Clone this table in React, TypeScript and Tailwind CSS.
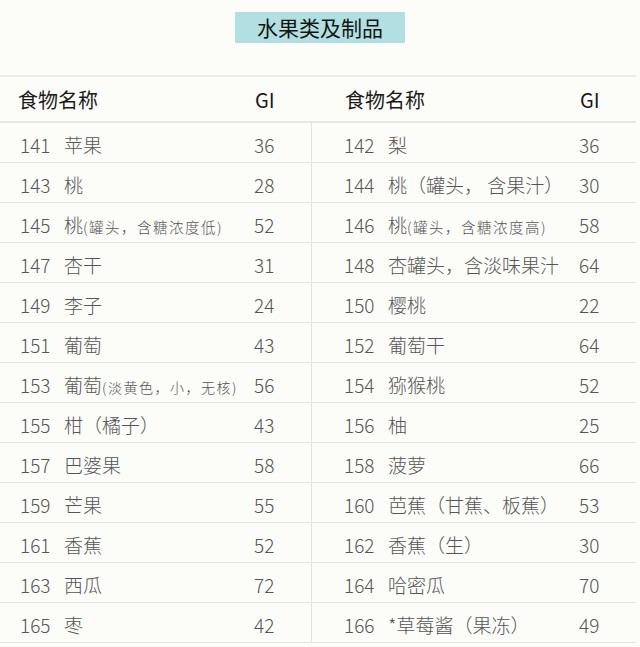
import React from "react";

type Item = { no: number; name: React.ReactNode; gi: number };

const font = { fontFamily: '"Noto Sans CJK SC", "Noto Sans", sans-serif' };

const rows: [Item, Item][] = [
  [{ no: 141, name: "苹果", gi: 36 }, { no: 142, name: "梨", gi: 36 }],
  [{ no: 143, name: "桃", gi: 28 }, { no: 144, name: "桃（罐头， 含果汁）", gi: 30 }],
  [
    {
      no: 145,
      name: <>桃<span className="text-[14.5px] tracking-[1.5px]">(罐头，含糖浓度低)</span></>,
      gi: 52,
    },
    {
      no: 146,
      name: <>桃<span className="text-[14.5px] tracking-[1.5px]">(罐头，含糖浓度高)</span></>,
      gi: 58,
    },
  ],
  [{ no: 147, name: "杏干", gi: 31 }, { no: 148, name: "杏罐头，含淡味果汁", gi: 64 }],
  [{ no: 149, name: "李子", gi: 24 }, { no: 150, name: "樱桃", gi: 22 }],
  [{ no: 151, name: "葡萄", gi: 43 }, { no: 152, name: "葡萄干", gi: 64 }],
  [
    {
      no: 153,
      name: <>葡萄<span className="text-[14px] tracking-[1.5px]">(淡黄色，小，无核)</span></>,
      gi: 56,
    },
    { no: 154, name: "猕猴桃", gi: 52 },
  ],
  [{ no: 155, name: "柑（橘子）", gi: 43 }, { no: 156, name: "柚", gi: 25 }],
  [{ no: 157, name: "巴婆果", gi: 58 }, { no: 158, name: "菠萝", gi: 66 }],
  [{ no: 159, name: "芒果", gi: 55 }, { no: 160, name: "芭蕉（甘蕉、板蕉）", gi: 53 }],
  [{ no: 161, name: "香蕉", gi: 52 }, { no: 162, name: "香蕉（生）", gi: 30 }],
  [{ no: 163, name: "西瓜", gi: 72 }, { no: 164, name: "哈密瓜", gi: 70 }],
  [{ no: 165, name: "枣", gi: 42 }, { no: 166, name: "*草莓酱（果冻）", gi: 49 }],
];

function Cell({ item, right }: { item: Item; right?: boolean }) {
  return (
    <div
      className={`flex h-full items-center pt-[6px] ${
        right ? "w-[324px] pl-[32px]" : "w-[312px] border-r border-[#e4e4e0] pl-[20px]"
      }`}
    >
      <span className="w-[44px] shrink-0">{item.no}</span>
      <span className={`shrink-0 whitespace-nowrap ${right ? "w-[191px]" : "w-[190px]"}`}>
        {item.name}
      </span>
      <span>{item.gi}</span>
    </div>
  );
}

export default function App() {
  return (
    <div className="h-[647px] w-[640px] overflow-hidden bg-[#fcfcf9]" style={font}>
      <div className="flex h-[75px] justify-center pt-[12px]">
        <div className="flex h-[31px] w-[170px] items-center justify-center bg-[#b2dfe1] text-[21px] text-[#141414]">
          水果类及制品
        </div>
      </div>
      <div className="w-[636px] border-t-2 border-[#ebebe7]">
        <div className="flex h-[46px] items-center border-b-2 border-[#e6e6e2] pt-[2px] text-[20px] text-[#1a1a1a]">
          <div className="flex w-[312px] pl-[18px]">
            <span className="w-[237px]">食物名称</span>
            <span>GI</span>
          </div>
          <div className="flex w-[324px] pl-[33px]">
            <span className="w-[235px]">食物名称</span>
            <span>GI</span>
          </div>
        </div>
        {rows.map(([a, b]) => (
          <div
            key={a.no}
            className="flex h-[40px] border-b border-[#e4e4e0] text-[19px] font-light text-[#555555]"
          >
            <Cell item={a} />
            <Cell item={b} right />
          </div>
        ))}
      </div>
    </div>
  );
}
